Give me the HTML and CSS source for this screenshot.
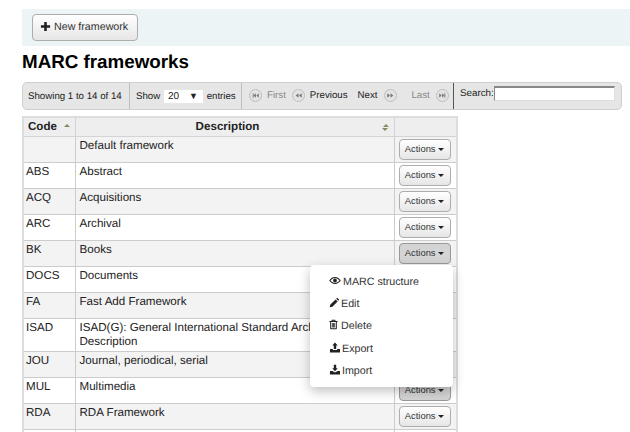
FILE: index.html
```html
<!DOCTYPE html>
<html lang="en">
<head>
    <meta charset="UTF-8">
    <meta name="viewport" content="width=device-width, initial-scale=1.0">
    <title>MARC frameworks</title>
    <link rel="stylesheet" href="styles.css">
</head>
<body>
    <div class="container">
        <div class="toolbar">
            <a class="btn new-btn" href="#">
                <svg class="icon" viewBox="0 0 12 12"><path d="M4.600 1h2.800v3.600H11v2.800H7.400V11H4.600V7.400H1V4.600h3.600z"/></svg>
                New framework
            </a>
        </div>
        <h1>MARC frameworks</h1>

        <div class="pager">
            <div class="pager-cell pager-info">Showing 1 to 14 of 14</div>
            <div class="pager-cell pager-length">
                Show
                <span class="fake-select">20<i class="select-arrow">▼</i></span>
                entries
            </div>
            <div class="pager-cell pager-nav">
                <span class="page-link disabled first"><svg class="page-icon" viewBox="0 0 14 14"><circle cx="7" cy="7" r="6.500"/><path class="glyph" d="M4 4.500h1v5H4zM7.500 4.500v5L5 7zM10.500 4.500v5L8 7z"/></svg>First</span>
                <span class="page-link disabled prev"><svg class="page-icon" viewBox="0 0 14 14"><circle cx="7" cy="7" r="6.500"/><path class="glyph" d="M7 4.500v5L4 7zM10.500 4.500v5L7.500 7z"/></svg><span class="enabled-text">Previous</span></span>
                <span class="page-link next">Next<svg class="page-icon" viewBox="0 0 14 14"><circle cx="7" cy="7" r="6.500"/><path class="glyph" d="M3.500 4.500v5L6.500 7zM7 4.500v5L10 7z"/></svg></span>
                <span class="page-link disabled last">Last<svg class="page-icon" viewBox="0 0 14 14"><circle cx="7" cy="7" r="6.500"/><path class="glyph" d="M3.500 4.500v5L6 7zM6.500 4.500v5L9 7zM9 4.500h1v5H9z"/></svg></span>
            </div>
            <div class="pager-search">
                <label>Search:</label><input class="search-input" type="text">
            </div>
        </div>

        <table class="frameworks">
            <thead>
                <tr>
                    <th class="col-code">Code <span class="sort-up"></span></th>
                    <th class="col-desc">Description <span class="sort-both"></span></th>
                    <th class="col-actions"></th>
                </tr>
            </thead>
            <tbody>
                <tr><td></td><td>Default framework</td><td class="actions"><button class="btn action-btn">Actions <i class="caret"></i></button></td></tr>
                <tr><td>ABS</td><td>Abstract</td><td class="actions"><button class="btn action-btn">Actions <i class="caret"></i></button></td></tr>
                <tr><td>ACQ</td><td>Acquisitions</td><td class="actions"><button class="btn action-btn">Actions <i class="caret"></i></button></td></tr>
                <tr><td>ARC</td><td>Archival</td><td class="actions"><button class="btn action-btn">Actions <i class="caret"></i></button></td></tr>
                <tr>
                    <td>BK</td><td>Books</td>
                    <td class="actions">
                        <button class="btn action-btn open">Actions <i class="caret"></i></button>
                        <ul class="menu">
                            <li><svg class="icon eye" viewBox="0 0 14 12"><path fill-rule="evenodd" d="M7 2C4 2 1.500 4 .3 6c1.200 2 3.700 4 6.700 4s5.500-2 6.700-4C12.500 4 10 2 7 2zm0 1.200c2 0 3.800 1.100 5.200 2.800C10.800 7.700 9 8.800 7 8.800S3.200 7.700 1.800 6C3.200 4.300 5 3.200 7 3.200zM7 3.800a2.200 2.200 0 1 0 0 4.400 2.200 2.200 0 0 0 0-4.400z"/></svg>MARC structure</li>
                            <li><svg class="icon edit" viewBox="0 0 12 12"><path d="M9 .8l2.200 2.200-1.200 1.200-2.200-2.200zM7.200 2.600l2.200 2.200L3.700 10.500.8 11.200l.7-2.900z"/></svg>Edit</li>
                            <li><svg class="icon trash" viewBox="0 0 10 12"><path fill-rule="evenodd" d="M3.200 .8h3.600l.6 1.400h2.100v1.100h-.8v7.200c0 .5-.3.8-.8.8H2.100c-.5 0-.8-.3-.8-.8V3.300H.5V2.200h2.100zM4 1.700l-.2.500h2.400L6 1.700zM2.400 3.300v7h5.200v-7zM3.200 4.400h.9v4.900h-.9zM4.600 4.400h.9v4.900h-.9zM5.900 4.400h.9v4.900h-.9z"/></svg>Delete</li>
                            <li><svg class="icon wide" viewBox="0 0 12 12"><path d="M6 .5l3 3.200H7.300v4H4.700v-4H3zM.5 7.500h3.200v1.200h4.600V7.500h3.200v4H.5z"/></svg>Export</li>
                            <li><svg class="icon wide" viewBox="0 0 12 12"><path d="M4.700 .8h2.600v3.800H9L6 7.900 3 4.600h1.700zM.5 7.500h2.600L6 9.400l2.900-1.900h2.600v4H.5z"/></svg>Import</li>
                        </ul>
                    </td>
                </tr>
                <tr><td>DOCS</td><td>Documents</td><td class="actions"><button class="btn action-btn">Actions <i class="caret"></i></button></td></tr>
                <tr><td>FA</td><td>Fast Add Framework</td><td class="actions"><button class="btn action-btn">Actions <i class="caret"></i></button></td></tr>
                <tr><td>ISAD</td><td class="wrap">ISAD(G): General International Standard Archival Description</td><td class="actions"><button class="btn action-btn">Actions <i class="caret"></i></button></td></tr>
                <tr><td>JOU</td><td>Journal, periodical, serial</td><td class="actions"><button class="btn action-btn">Actions <i class="caret"></i></button></td></tr>
                <tr><td>MUL</td><td>Multimedia</td><td class="actions"><button class="btn action-btn open">Actions <i class="caret"></i></button></td></tr>
                <tr><td>RDA</td><td>RDA Framework</td><td class="actions"><button class="btn action-btn">Actions <i class="caret"></i></button></td></tr>
                <tr><td></td><td></td><td class="actions"><button class="btn action-btn" aria-label="Actions"></button></td></tr>
            </tbody>
        </table>
    </div>
</body>
</html>
```

FILE: styles.css
```css
html, body {
    height: 432px;
    overflow: hidden;
}

body {
    font-family: "Liberation Sans", Arial, sans-serif;
    font-size: 11.600px;
    color: #000;
    background: #fff;
    margin: 0;
    text-rendering: geometricPrecision;
}

.container {
    padding: 9px 0 0 22px;
}

.toolbar {
    background: #edf4f6;
    height: 37px;
    padding: 5px 0 0 10px;
    box-sizing: border-box;
}

.btn {
    display: inline-block;
    box-sizing: border-box;
    font-family: inherit;
    color: #333;
    background: linear-gradient(#ffffff, #e6e6e6);
    border: 1px solid #adadad;
    border-radius: 4px;
    text-decoration: none;
    cursor: pointer;
}

.new-btn {
    width: 106px;
    height: 27px;
    font-size: 10.700px;
    line-height: 25px;
    padding-left: 7px;
    white-space: nowrap;
}

.new-btn .icon {
    width: 11px;
    height: 11px;
    vertical-align: -2px;
    fill: #222;
}

h1 {
    font-size: 18.800px;
    font-weight: bold;
    line-height: 22px;
    margin: 5px 0 9px;
}

/* datatables pager strip */
.pager {
    display: flex;
    width: 600px;
    height: 28px;
    box-sizing: border-box;
    background: #e6e6e6;
    border: 1px solid #cfcfcf;
    border-radius: 5px;
    font-size: 9.700px;
    color: #222;
    line-height: 26px;
}

.pager-cell {
    box-sizing: border-box;
    white-space: nowrap;
    border-right: 1px solid #bdbdbd;
}

.pager-info {
    width: 107px;
    padding: 1px 0 0 5px;
}

.pager-length {
    width: 112px;
    padding: 1px 0 0 6px;
}

.fake-select {
    display: inline-block;
    position: relative;
    width: 39px;
    height: 13px;
    line-height: 13px;
    background: #fff;
    padding-left: 4px;
    box-sizing: border-box;
    margin: 0 1px;
    font-size: 10px;
}

.select-arrow {
    position: absolute;
    right: 5px;
    top: 0;
    font-style: normal;
    font-size: 9px;
}

.pager-nav {
    display: flex;
    width: 212px;
    padding-left: 7px;
    border-right: 1px solid #555;
}

.page-link {
    display: flex;
    align-items: center;
    gap: 5px;
}

.page-link.disabled {
    color: #888;
}

.page-link.first {
    margin-right: 6px;
}

.page-link.prev {
    margin-right: 10px;
}

.page-link.next {
    margin-right: 14px;
    gap: 7px;
}

.page-link.last {
    gap: 6px;
}

.enabled-text {
    color: #222;
}

.page-icon {
    width: 13px;
    height: 13px;
    margin-bottom: 2px;
}

.page-icon circle {
    fill: #e3e3e3;
    stroke: #bbb;
}

.page-icon .glyph {
    fill: #777;
}

.pager-search {
    padding-left: 6px;
    white-space: nowrap;
    line-height: 22px;
    font-size: 9.800px;
}

.search-input {
    width: 121px;
    height: 15px;
    box-sizing: border-box;
    padding: 0;
    margin: 3px 0 0;
    vertical-align: top;
    border: 1px solid #ddd;
    border-top: 2px solid #888;
    border-left-color: #888;
    background: #fff;
}

/* table */
.frameworks {
    margin-top: 6px;
    width: 436px;
    table-layout: fixed;
    border-collapse: collapse;
    border: 2px solid #ddd;
    border-bottom: none;
}

.frameworks th {
    box-sizing: border-box;
    background: #eeeeee;
    height: 19px;
    padding: 0 4px;
    color: #222;
    border: 1px solid #d4d4d4;
    position: relative;
}

.col-code {
    width: 52px;
    text-align: left;
}

.frameworks th.col-desc {
    padding-right: 18px;
}

.col-actions {
    width: 63px;
}

.sort-up {
    display: inline-block;
    border: 3.500px solid transparent;
    border-top: none;
    border-bottom: 3.500px solid #8a8a5c;
    margin-left: 4px;
    vertical-align: 3px;
}

.sort-both {
    position: absolute;
    right: 5px;
    top: 6px;
    width: 0;
    height: 0;
    border: 3.500px solid transparent;
    border-top: none;
    border-bottom: 3.500px solid #8a8a5c;
}

.sort-both::after {
    content: "";
    position: absolute;
    left: -3.500px;
    top: 4px;
    border: 3.500px solid transparent;
    border-bottom: none;
    border-top: 3.500px solid #8a8a5c;
}

.frameworks td {
    padding: 2px 3px 2px 4px;
    vertical-align: top;
    line-height: 14px;
    border: 1px solid #ccc;
    color: #222;
}

.frameworks td:first-child {
    padding-left: 2px;
}

.frameworks td.wrap {
    padding-right: 12px;
}

.frameworks tbody tr:nth-child(odd) td {
    background: #f3f3f3;
}

.frameworks td.actions {
    padding: 2px 3px;
    position: relative;
}

.action-btn {
    display: block;
    width: 52px;
    height: 21px;
    padding: 0 0 2px;
    font-size: 9.400px;
    margin-left: 1px;
}

.action-btn.open {
    background: #d4d4d4;
    border-color: #999;
}

.caret {
    display: inline-block;
    border: 3.500px solid transparent;
    border-bottom: none;
    border-top: 3.500px solid #222;
    vertical-align: 1px;
}

.menu {
    position: absolute;
    z-index: 10;
    right: 3px;
    top: 24px;
    width: 143px;
    height: 122px;
    box-sizing: border-box;
    list-style: none;
    margin: 0;
    padding: 6px 0 0;
    background: #fff;
    border-radius: 4px;
    box-shadow: 0 4px 12px rgba(0, 0, 0, 0.25);
    font-size: 10.700px;
}

.menu li {
    height: 22.400px;
    line-height: 22px;
    padding-left: 19px;
    color: #333;
    white-space: nowrap;
}

.menu .icon {
    width: 11px;
    height: 11px;
    margin-right: 2px;
    fill: #222;
    vertical-align: -1px;
}

.menu .icon.edit {
    margin-right: 1px;
}

.menu .icon.eye {
    width: 12px;
}

.menu .icon.trash {
    width: 9px;
    margin-right: 3px;
}

.menu .icon.wide {
    width: 12px;
    margin-right: 1px;
}
```
